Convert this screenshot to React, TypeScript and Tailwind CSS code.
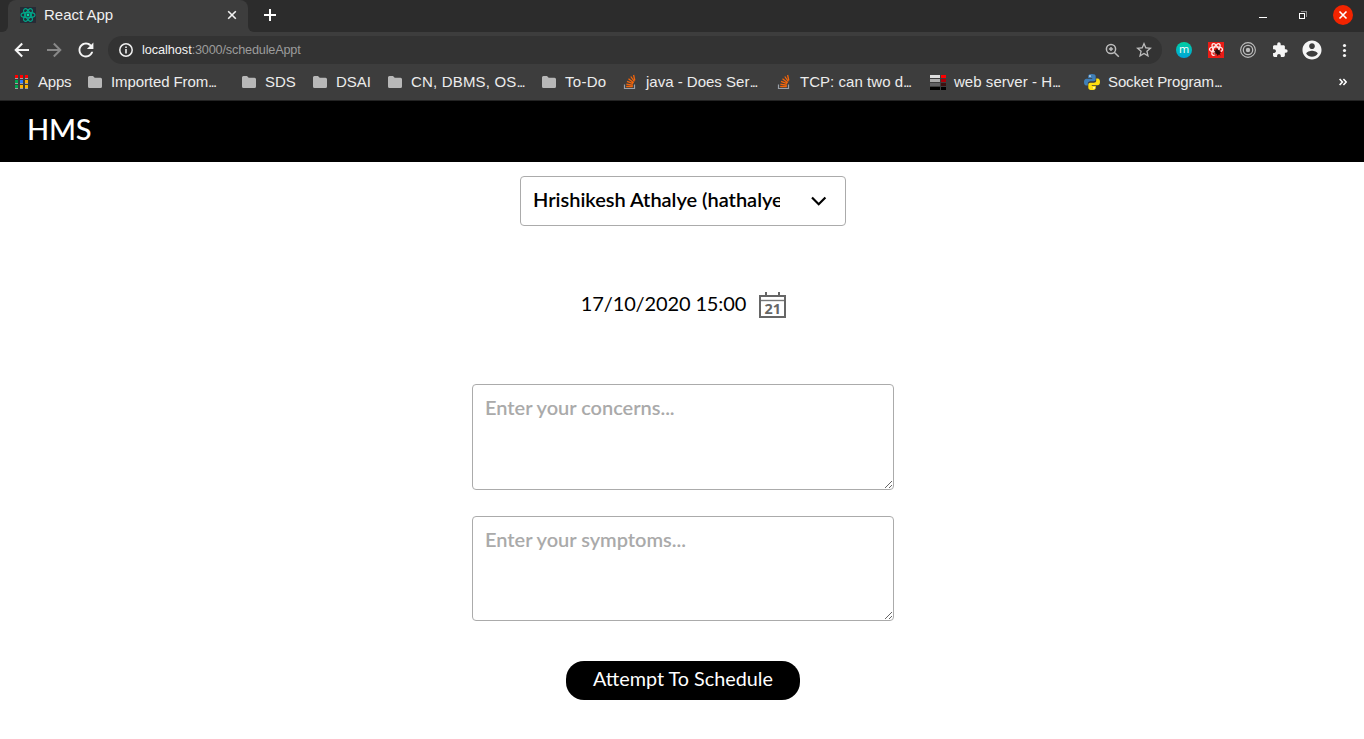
import type { ReactNode } from 'react';

const Folder = () => (
  <svg width="16" height="16" viewBox="0 0 16 16" fill="#b8b8b8">
    <path d="M1 3.600A1.500 1.500 0 0 1 2.500 2H6l1.700 1.800h5.800A1.500 1.500 0 0 1 15 5.300v7.200a1.500 1.500 0 0 1-1.500 1.500h-11A1.500 1.500 0 0 1 1 12.500z" />
  </svg>
);

const APP_COLORS = [
  '#ff0000', '#ff0000', '#ff0000',
  '#00a651', '#2f7bff', '#ffae00',
  '#00a651', '#ffb400', '#ffb400',
];

const AppsGrid = () => (
  <svg width="16" height="16" viewBox="0 0 16 16" shapeRendering="crispEdges">
    {APP_COLORS.map((c, i) => (
      <g key={i}>
        <rect x={1 + (i % 3) * 5} y={1 + Math.floor(i / 3) * 5} width="3" height="3" fill={c} />
        <rect x={1 + (i % 3) * 5} y={4 + Math.floor(i / 3) * 5} width="3" height="1" fill="#a0a0a0" />
      </g>
    ))}
  </svg>
);

const Stack = () => (
  <svg width="16" height="16" viewBox="0 0 16 16" fill="none">
    <path d="M2.500 10.500v4h10v-4" stroke="#9aa0a8" strokeWidth="1.200" />
    <path d="M4.200 12.500h6.600M4.300 10.100l6.600 1M5 7.300l6.200 2.400M6.500 4.800l5.200 4M8.800 2.500l3.500 5M11.600 1l1.200 5.500" stroke="#f4650a" strokeWidth="1.300" />
  </svg>
);

const HostIcon = () => (
  <svg width="16" height="16" viewBox="0 0 16 16" shapeRendering="crispEdges">
    <path d="M0 1h10v3H0z" fill="#dedede" />
    <path d="M0 5h10v3H0z" fill="#ababab" />
    <path d="M0 9h10v3H0z" fill="#606062" />
    <path d="M0 13h10v3H0z" fill="#000" />
    <path d="M11 1h5v3h-5z" fill="#f00" />
    <path d="M11 5h5v3h-5z" fill="#aa0008" />
    <path d="M11 9h5v3h-5z" fill="#401010" />
    <path d="M11 13h5v3h-5z" fill="#000" />
  </svg>
);

const Python = () => (
  <svg width="16" height="16" viewBox="0 0 16 16">
    <path d="M7.900 0C5.400 0 4.200.9 4.200 2.300V4h4v.7H2.400C.9 4.700 0 6 0 8s.8 3.500 2.200 3.500h1.600V9.600c0-1.300 1-2.300 2.300-2.300h3.700c1.100 0 1.900-.9 1.900-2V2.300C11.700.8 10.400 0 7.900 0z" fill="#3f7fb8" />
    <path d="M8.100 16c2.500 0 3.700-.9 3.700-2.300V12h-4v-.7h5.800C15.100 11.300 16 10 16 8s-.8-3.500-2.200-3.500h-1.600v1.900c0 1.300-1 2.300-2.300 2.300H6.200c-1.100 0-1.900.9-1.900 2v3c0 1.500 1.300 2.300 3.800 2.300z" fill="#ffe010" />
    <circle cx="6" cy="2.100" r=".8" fill="#fff" />
    <circle cx="10" cy="13.900" r=".8" fill="#fff" />
  </svg>
);

type BookmarkProps = { icon: ReactNode; label: string; width: string; clipped?: boolean; tracking?: string };

const Bookmark = ({ icon, label, width, clipped, tracking = '' }: BookmarkProps) => (
  <div className={`flex shrink-0 items-center gap-2 ${width}`}>
    {icon}
    <span className={`whitespace-nowrap text-[15px] leading-5 text-[#ececec] ${tracking}`}>
      {label}
      {clipped && <span className="tracking-[-1.700px]">...</span>}
    </span>
  </div>
);

const ReactLogo = () => (
  <svg width="16" height="16" viewBox="0 0 16 16">
    <rect width="16" height="16" fill="#262b36" />
    <g fill="none" stroke="#00a88a" strokeWidth="1.150">
      <ellipse cx="8" cy="8" rx="7" ry="2.700" />
      <ellipse cx="8" cy="8" rx="7" ry="2.700" transform="rotate(60 8 8)" />
      <ellipse cx="8" cy="8" rx="7" ry="2.700" transform="rotate(120 8 8)" />
    </g>
    <circle cx="8" cy="8" r="1.400" fill="#00d8a8" />
  </svg>
);

const TabStrip = () => (
  <div className="flex h-8 bg-[#2c2c2c]">
    <div className="flex w-2 items-end bg-[#3d3d3d]">
      <div className="h-8 w-2 rounded-br-[6px] bg-[#2c2c2c]" />
    </div>
    <div className="flex w-60 items-center rounded-t-[8px] bg-[#3d3d3d] pl-3 pr-[11px] pb-[2px]">
      <ReactLogo />
      <span className="ml-2 flex-1 text-[15px] leading-5 text-[#f0f0f0]">React App</span>
      <svg width="10" height="10" viewBox="0 0 10 10" stroke="#f2f2f2" strokeWidth="1.600">
        <path d="M1.200 1.200l7.600 7.600M8.800 1.200L1.200 8.800" />
      </svg>
    </div>
    <div className="w-2 bg-[#3d3d3d]">
      <div className="h-8 w-2 rounded-bl-[6px] bg-[#2c2c2c]" />
    </div>
    <div className="flex flex-1 items-center pl-2 pb-[2px]">
      <svg width="12" height="12" viewBox="0 0 12 12" stroke="#fff" strokeWidth="2">
        <path d="M6 0v12M0 6h12" />
      </svg>
    </div>
    <div className="flex items-center pr-[11px] pb-[2px]">
      <svg width="8" height="16" viewBox="0 0 8 16" shapeRendering="crispEdges">
        <path d="M0 10h8v1H0z" fill="#fff" />
      </svg>
      <svg className="ml-8" width="8" height="8" viewBox="0 0 8 8" fill="none" shapeRendering="crispEdges">
        <path d="M2 .5h5.500V6" stroke="#8c8c8c" />
        <path d="M.5 2.500h5v5h-5z" stroke="#fff" />
      </svg>
      <svg className="ml-[26px]" width="20" height="20" viewBox="0 0 20 20">
        <circle cx="10" cy="10" r="10" fill="#f22400" />
        <path d="M6.500 6.500l7 7M13.500 6.500l-7 7" stroke="#fff" strokeWidth="1.600" />
      </svg>
    </div>
  </div>
);

const Toolbar = () => (
  <div className="flex h-9 items-center pl-[14px] pr-3">
    <svg width="16" height="16" viewBox="0 0 16 16" fill="none" stroke="#f5f5f5" strokeWidth="2">
      <path d="M15 8H2.500M8.200 1.500L1.700 8l6.500 6.500" />
    </svg>
    <svg className="ml-4" width="16" height="16" viewBox="0 0 16 16" fill="none" stroke="#888" strokeWidth="2">
      <path d="M1 8h12.500M7.800 1.500L14.300 8l-6.500 6.500" />
    </svg>
    <svg className="ml-4" width="16" height="16" viewBox="4 4 16 16" fill="#f5f5f5">
      <path d="M17.650 6.350C16.200 4.900 14.210 4 12 4 7.580 4 4.010 7.580 4.010 12S7.580 20 12 20c3.730 0 6.840-2.550 7.730-6h-2.080c-.82 2.330-3.040 4-5.650 4-3.310 0-6-2.690-6-6s2.690-6 6-6c1.660 0 3.140.69 4.220 1.780L13 11h7V4l-2.350 2.350z" transform="translate(.8 .8) scale(.93)" />
    </svg>
    <div className="ml-[14px] flex h-7 w-[1054px] items-center rounded-full bg-[#333333] pl-[11px] pr-[10px]">
      <svg width="14" height="14" viewBox="0 0 14 14" fill="none">
        <circle cx="7" cy="7" r="6.200" stroke="#f0f0f0" strokeWidth="1.500" />
        <path d="M6.200 6h1.600v4.500H6.200zM6.200 3.400h1.600V5H6.200z" fill="#f0f0f0" />
      </svg>
      <div className="ml-[9px] flex-1 text-[12.700px] leading-5 tracking-[-0.18px] text-[#9c9c9c]">
        <span className="tracking-[-0.05px] text-[#f2f2f2]">localhost</span>:3000/scheduleAppt
      </div>
      <svg width="15" height="15" viewBox="0 0 15 15" fill="none" stroke="#bdbdbd" strokeWidth="1.500">
        <circle cx="6" cy="6" r="4.600" />
        <path d="M9.200 9.200l4.600 4.600M6 3.900v4.200M3.900 6h4.200" />
      </svg>
      <svg className="ml-4" width="16" height="16" viewBox="2 2 20 20" fill="#bdbdbd">
        <path d="M22 9.240l-7.190-.62L12 2 9.190 8.630 2 9.240l5.460 4.730L5.820 21 12 17.270 18.180 21l-1.630-7.030L22 9.240zM12 15.400l-3.760 2.270 1-4.280-3.320-2.880 4.380-.38L12 6.100l1.710 4.040 4.380.38-3.320 2.880 1 4.280L12 15.400z" />
      </svg>
    </div>
    <div className="ml-[14px] flex h-4 w-4 items-center justify-center rounded-full bg-linear-to-b from-[#00cf9e] to-[#00a3d8]">
      <span className="mt-[-2px] font-['Open_Sans',sans-serif] text-[11px] leading-3 text-white">m</span>
    </div>
    <svg className="ml-4" width="16" height="16" viewBox="0 0 16 16">
      <rect width="16" height="16" fill="#ea1c16" />
      <g fill="none" stroke="#ffe4e2" strokeWidth="1.300">
        <ellipse cx="8" cy="7.500" rx="6.500" ry="2.600" />
        <ellipse cx="8" cy="7.500" rx="6.500" ry="2.600" transform="rotate(60 8 7.500)" />
        <ellipse cx="8" cy="7.500" rx="6.500" ry="2.600" transform="rotate(120 8 7.500)" />
      </g>
      <path d="M6.500 6.500L13 9.500v4.500H7.500z" fill="#ea1c16" />
      <ellipse cx="9.700" cy="10" rx="2" ry="2.900" fill="#26100e" transform="rotate(-35 9.700 10)" />
      <path d="M6 8l6.500 5M6.500 12.800L12.500 7.500M9 6.500l.7 7.300M6.200 10.300h6.800" stroke="#26100e" strokeWidth=".8" />
    </svg>
    <svg className="ml-4" width="16" height="16" viewBox="0 0 16 16" fill="none" stroke="#bcbcbc">
      <circle cx="8" cy="8" r="7.400" strokeWidth="1.100" />
      <circle cx="8" cy="8" r="4.700" strokeWidth="1.300" />
      <circle cx="8" cy="8" r="2.200" fill="#bcbcbc" stroke="none" />
    </svg>
    <svg className="ml-4" width="16" height="16" viewBox="0.500 0.500 23 23" fill="#f5f5f5">
      <path d="M20.500 11H19V7c0-1.100-.9-2-2-2h-4V3.500a2.500 2.500 0 0 0-5 0V5H4c-1.100 0-1.990.9-1.990 2v3.800H3.500c1.490 0 2.700 1.210 2.700 2.700s-1.210 2.700-2.700 2.700H2V20c0 1.100.9 2 2 2h3.800v-1.500c0-1.490 1.210-2.700 2.700-2.700s2.700 1.210 2.700 2.700V22H17c1.100 0 2-.9 2-2v-4h1.500a2.500 2.500 0 0 0 0-5z" />
    </svg>
    <svg className="ml-[14px]" width="20" height="20" viewBox="1.500 1.500 21 21" fill="#f5f5f5">
      <path d="M12 2C6.480 2 2 6.480 2 12s4.480 10 10 10 10-4.480 10-10S17.520 2 12 2zm0 3c1.660 0 3 1.340 3 3s-1.340 3-3 3-3-1.340-3-3 1.340-3 3-3zm0 14.200c-2.500 0-4.710-1.280-6-3.220.03-1.990 4-3.080 6-3.080 1.990 0 5.970 1.090 6 3.080-1.290 1.940-3.500 3.220-6 3.220z" />
    </svg>
    <svg className="ml-[14px]" width="16" height="16" viewBox="0 0 16 16" fill="#f5f5f5">
      <circle cx="8.500" cy="3.500" r="1.600" />
      <circle cx="8.500" cy="8.500" r="1.600" />
      <circle cx="8.500" cy="13.500" r="1.600" />
    </svg>
  </div>
);

const BookmarksBar = () => (
  <div className="flex h-8 items-center pb-[4px] pl-[14px] pr-[17px]">
    <Bookmark icon={<AppsGrid />} label="Apps" width="w-[73px]" tracking="tracking-[-0.2px]" />
    <Bookmark icon={<Folder />} label="Imported From" width="w-[154px]" clipped tracking="tracking-[-0.1px]" />
    <Bookmark icon={<Folder />} label="SDS" width="w-[71px]" />
    <Bookmark icon={<Folder />} label="DSAI" width="w-[75px]" />
    <Bookmark icon={<Folder />} label="CN, DBMS, OS" width="w-[154px]" clipped tracking="tracking-[0.18px]" />
    <Bookmark icon={<Folder />} label="To-Do" width="w-[81px]" tracking="tracking-[0.3px]" />
    <Bookmark icon={<Stack />} label="java - Does Ser" width="w-[154px]" clipped />
    <Bookmark icon={<Stack />} label="TCP: can two d" width="w-[154px]" clipped tracking="tracking-[0.04px]" />
    <Bookmark icon={<HostIcon />} label="web server - H" width="w-[154px]" clipped tracking="tracking-[0.04px]" />
    <Bookmark icon={<Python />} label="Socket Program" width="w-[154px]" clipped tracking="tracking-[-0.12px]" />
    <svg className="ml-auto" width="8" height="8" viewBox="0 0 8 8" fill="none" stroke="#fff" strokeWidth="1.600">
      <path d="M.6 1l2.800 3L.6 7M4.400 1l2.800 3-2.800 3" />
    </svg>
  </div>
);

const CalendarIcon = () => (
  <svg width="27" height="26" viewBox="0 0 27 26" fill="none">
    <path d="M1 4h25v21H1z" stroke="#666" strokeWidth="2" />
    <path d="M2 8.500h23" stroke="#777" strokeWidth="1.400" />
    <path d="M7 0v4M20 0v4" stroke="#666" strokeWidth="2" />
    <text x="5.500" y="22" textLength="16.500" lengthAdjust="spacingAndGlyphs" fontFamily="Open Sans, sans-serif" fontWeight="700" fontSize="13.500" fill="#666">21</text>
  </svg>
);

const FIELD =
  'block w-[422px] resize rounded-[4px] border border-[#ababab] bg-white px-3 pt-[11px] pb-3 text-[20px] leading-[23px] font-semibold tracking-[-0.02px] text-black outline-none placeholder:text-[#aaaaaa] placeholder:opacity-100';

export default function App() {
  return (
    <div className="flex h-[739px] w-[1364px] flex-col overflow-hidden bg-white">
      <div className="h-[101px] border-b border-[#232323] bg-[#3d3d3d] font-['Liberation_Sans',sans-serif]">
        <TabStrip />
        <Toolbar />
        <BookmarksBar />
      </div>
      <div className="flex flex-1 flex-col font-[Lato,sans-serif] text-black">
        <header className="flex h-[61px] items-center bg-black pl-[27px] pb-[5px]">
          <h1 className="text-[29px] leading-9 font-medium tracking-[-0.2px] text-white">HMS</h1>
        </header>
        <main className="flex flex-col items-center pl-[2px] pt-[14px]">
          <div className="flex h-[50px] w-[326px] items-center rounded-[4px] border border-[#ababab] pl-3">
            <input
              readOnly
              value="Hrishikesh Athalye (hathalye)"
              className="w-[247px] cursor-pointer bg-transparent pb-[5px] text-[20px] leading-6 font-semibold tracking-[-0.02px] outline-none"
            />
            <svg className="ml-[31px]" width="16" height="10" viewBox="0 0 16 10" fill="none" stroke="#000" strokeWidth="2.200">
              <path d="M1 1.500l6.700 6.700 6.700-6.700" />
            </svg>
          </div>
          <div className="mt-[65px] flex h-7 items-start gap-[13px] pl-px">
            <span className="text-[20px] leading-6 tracking-[-0.13px]">17/10/2020 15:00</span>
            <div className="pt-px">
              <CalendarIcon />
            </div>
          </div>
          <textarea className={`${FIELD} mt-[65px] h-[106px]`} placeholder="Enter your concerns..." />
          <textarea className={`${FIELD} mt-[26px] h-[105px]`} placeholder="Enter your symptoms..." />
          <button className="mt-10 flex h-[39px] w-[234px] items-center justify-center rounded-[18px] bg-black pb-[5px] text-[19.800px] leading-6 text-white">
            Attempt To Schedule
          </button>
        </main>
      </div>
    </div>
  );
}
